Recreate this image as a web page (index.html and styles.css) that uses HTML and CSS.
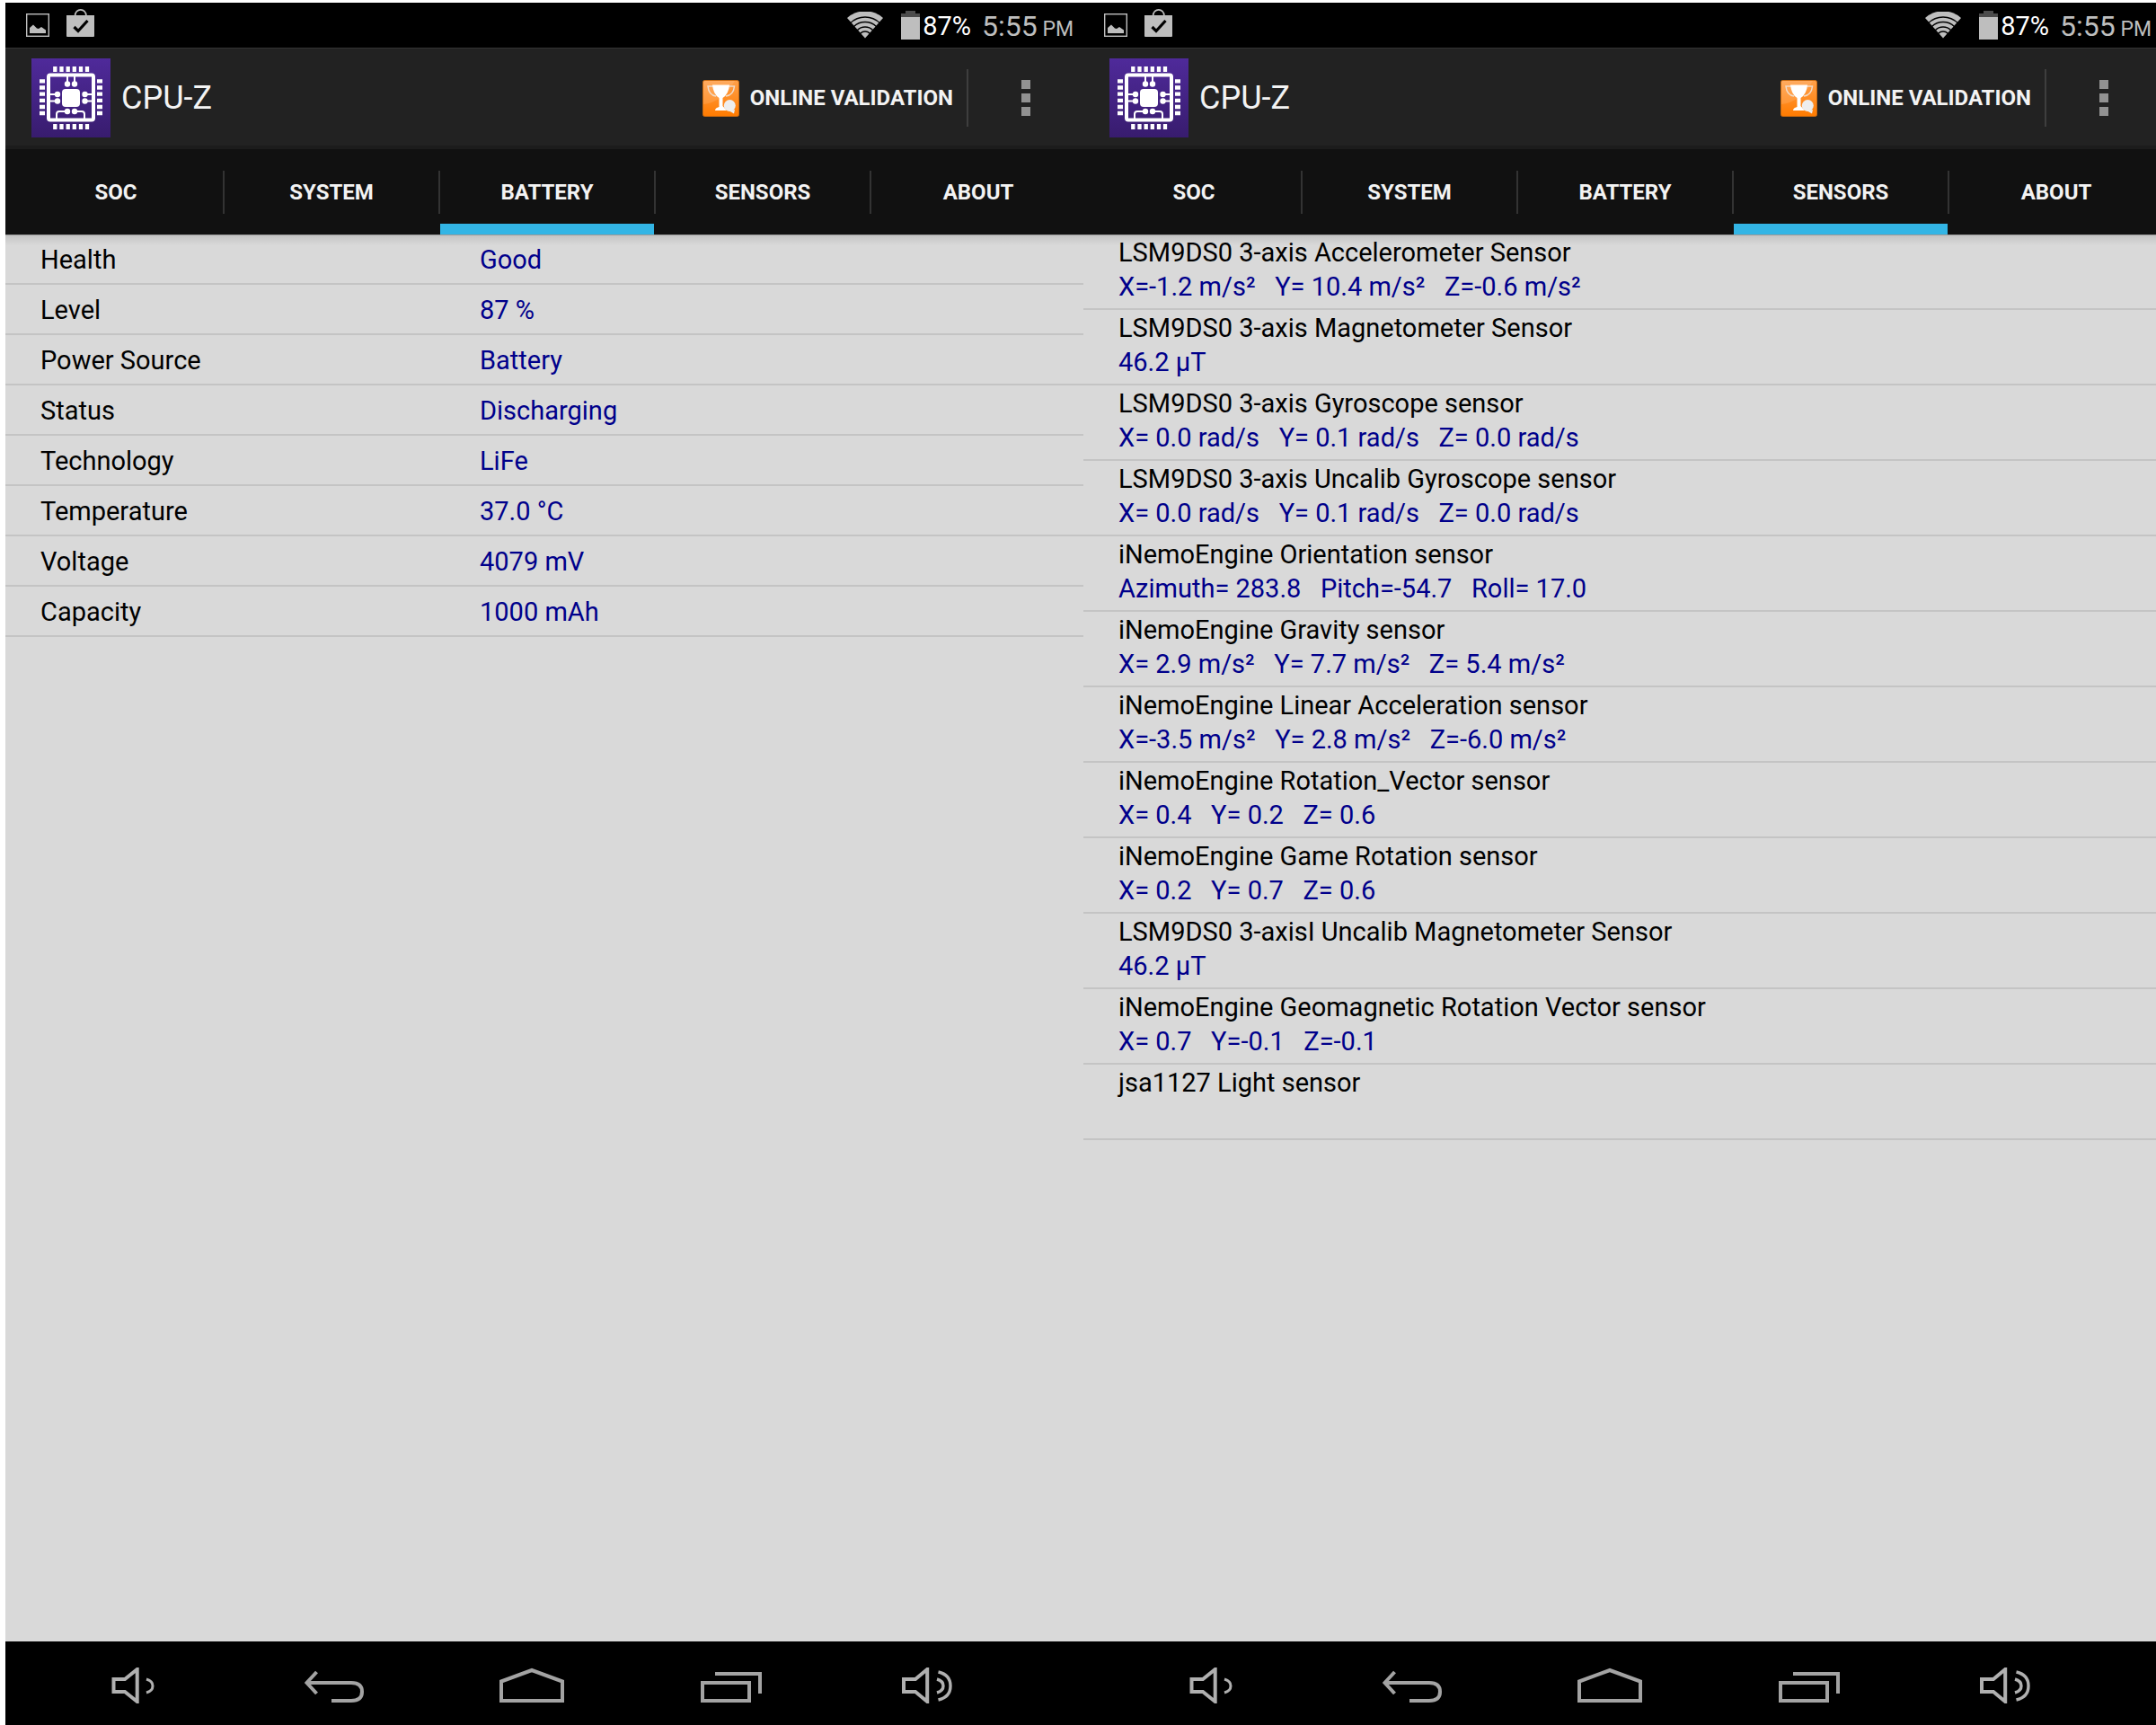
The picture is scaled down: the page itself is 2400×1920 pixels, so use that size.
FILE: index.html
```html
<!DOCTYPE html>
<html lang="en">
<head>
    <meta charset="UTF-8">
    <meta name="viewport" content="width=device-width, initial-scale=1.0">
    <title>CPU-Z</title>
    <link rel="stylesheet" href="styles.css">
</head>
<body>

    <!-- shared icons -->
    <svg class="sprite" aria-hidden="true">
        <linearGradient id="purple" x1="0" y1="0" x2="0" y2="1">
            <stop offset="0" stop-color="#4f2a9a"/>
            <stop offset="1" stop-color="#381c6e"/>
        </linearGradient>
        <linearGradient id="orange" x1="0" y1="0" x2="0" y2="1">
            <stop offset="0" stop-color="#ffa04a"/>
            <stop offset="1" stop-color="#ff7b00"/>
        </linearGradient>
        <symbol id="icon-picture" viewBox="0 0 26 26">
            <rect x="0.7" y="0.7" width="24.600" height="24.600" fill="none" stroke="#bebebe" stroke-width="1.400"/>
            <path d="M4 22V16L8 12.500L12 16.500L14 17L17 15L22 18.500V22Z" fill="#bebebe"/>
        </symbol>
        <symbol id="icon-bag" viewBox="0 0 31 31">
            <path d="M9.500 8C9.500 -1.500 22 -1.500 22 8" fill="none" stroke="#bebebe" stroke-width="1.600"/>
            <path d="M0 7H31V30Q31 31 30 31H1Q0 31 0 30Z" fill="#bebebe"/>
            <path d="M8.500 20L13 24.500L23.500 13" fill="none" stroke="#000" stroke-width="3.200"/>
        </symbol>
        <symbol id="icon-wifi" viewBox="0 0 40 30">
            <path d="M20 29.500L0 7A30 30 0 0 1 40 7Z" fill="#bebebe"/>
            <g fill="none" stroke="#000" stroke-width="1.400">
                <circle cx="20" cy="29.500" r="23.500"/>
                <circle cx="20" cy="29.500" r="18"/>
                <circle cx="20" cy="29.500" r="12.500"/>
                <circle cx="20" cy="29.500" r="7.500"/>
            </g>
        </symbol>
        <symbol id="icon-battery" viewBox="0 0 21 32">
            <path d="M5 0H16V3H21V7H0V3H5Z" fill="#4c4c4c"/>
            <rect y="7" width="21" height="25" fill="#bebebe"/>
        </symbol>
        <symbol id="icon-cpu" viewBox="0 0 88 88">
            <rect width="88" height="88" fill="url(#purple)"/>
            <rect x="19" y="18.500" width="50" height="50" rx="2" fill="none" stroke="#fff" stroke-width="4"/>
            <rect x="34" y="34" width="20" height="20" rx="4" fill="#fff"/>
            <path d="M26.300 9V15M33.500 9V15M40.700 9V15M47.800 9V15M55 9V15M62 9V15M26.300 73V79M33.500 73V79M40.700 73V79M47.800 73V79M55 73V79M62 73V79M9 25.300H15M9 32.500H15M9 39.700H15M9 46.800H15M9 54H15M9 61H15M73 25.300H79M73 32.500H79M73 39.700H79M73 46.800H79M73 54H79M73 61H79" stroke="#fff" stroke-width="4.300"/>
            <path d="M40 20V28M48 20V28M21 40H29M21 47.500H29M59 40H67M59 47.500H67M40 59H31Q28 59 28 62V67M48 59H56Q59 59 59 62V67" fill="none" stroke="#fff" stroke-width="2"/>
            <g fill="#fff">
                <circle cx="40" cy="28.500" r="3.200"/><circle cx="48" cy="28.500" r="3.200"/>
                <circle cx="29" cy="40" r="3.200"/><circle cx="29" cy="47.500" r="3.200"/>
                <circle cx="59.500" cy="40" r="3.200"/><circle cx="59.500" cy="47.500" r="3.200"/>
                <circle cx="40" cy="59" r="3.200"/><circle cx="48" cy="59" r="3.200"/>
            </g>
        </symbol>
        <symbol id="icon-trophy" viewBox="0 0 41 41">
            <rect x="0.500" y="0.500" width="40" height="40" rx="2" fill="url(#orange)" stroke="#c9690f"/>
            <path d="M1 27Q22 25 36 1H1Z" fill="#fff" opacity="0.120"/>
            <path d="M12 7H6Q7 17 15 18M29 7H35.500Q34.500 17 26 18" fill="none" stroke="#f0dccb" stroke-width="1.500"/>
            <path d="M11 5.500H30Q29 16 22.500 20V29L27 34H14Q14 31 18.500 30V20Q12 16 11 5.500Z" fill="#fff"/>
            <circle cx="30.300" cy="28.500" r="6.500" fill="#eee"/>
            <path d="M29 34L35 37.500L36 33Z" fill="#eee"/>
        </symbol>
        <symbol id="icon-volume-down" viewBox="0 0 80 40">
            <path d="M16.500 13H29L42.700 2V38L29 27H16.500Z" fill="none" stroke="#b0b0b0" stroke-width="4"/>
            <path d="M53 13Q60 15 60 20.500T53 28" fill="none" stroke="#b0b0b0" stroke-width="3"/>
        </symbol>
        <symbol id="icon-back" viewBox="0 0 80 40">
            <path d="M21.500 5L10.500 17L21.500 29M10.500 17H60Q72 17 72 27T60 37H38" fill="none" stroke="#a3a3a3" stroke-width="4"/>
        </symbol>
        <symbol id="icon-home" viewBox="0 0 80 40">
            <path d="M6 15.500L40 3L74 15.500V37H6Z" fill="none" stroke="#a3a3a3" stroke-width="4"/>
        </symbol>
        <symbol id="icon-recents" viewBox="0 0 80 40">
            <path d="M9 17H61V37H9ZM23 7H73V29" fill="none" stroke="#a3a3a3" stroke-width="4"/>
        </symbol>
        <symbol id="icon-volume-up" viewBox="0 0 80 40">
            <path d="M12 13H25L38.200 2V38L25 27H12Z" fill="none" stroke="#b0b0b0" stroke-width="4"/>
            <path d="M49 13Q56 15 56 20.500T49 28M50.500 5Q64 8 64 20.500T50.500 36" fill="none" stroke="#b0b0b0" stroke-width="3.400"/>
        </symbol>
    </svg>

    <main class="screens">

        <!-- battery -->
        <section class="screen">
            <header class="status-bar">
                <div class="notifications">
                    <svg class="picture"><use href="#icon-picture"/></svg>
                    <svg class="bag"><use href="#icon-bag"/></svg>
                </div>
                <div class="system">
                    <svg class="wifi"><use href="#icon-wifi"/></svg>
                    <svg class="battery"><use href="#icon-battery"/></svg>
                    <span class="percent">87%</span>
                    <span class="clock">5:55<small> PM</small></span>
                </div>
            </header>
            <div class="action-bar">
                <svg class="logo"><use href="#icon-cpu"/></svg>
                <h1>CPU-Z</h1>
                <button class="validate"><svg class="trophy"><use href="#icon-trophy"/></svg>ONLINE VALIDATION</button>
                <button class="menu" aria-label="More options"><i></i><i></i><i></i></button>
            </div>
            <nav class="tabs">
                <button>SOC</button>
                <button>SYSTEM</button>
                <button class="active">BATTERY</button>
                <button>SENSORS</button>
                <button>ABOUT</button>
            </nav>
            <div class="content">
                <table class="info">
                    <tr><th scope="row">Health</th><td>Good</td></tr>
                    <tr><th scope="row">Level</th><td>87 %</td></tr>
                    <tr><th scope="row">Power Source</th><td>Battery</td></tr>
                    <tr><th scope="row">Status</th><td>Discharging</td></tr>
                    <tr><th scope="row">Technology</th><td>LiFe</td></tr>
                    <tr><th scope="row">Temperature</th><td>37.0 °C</td></tr>
                    <tr><th scope="row">Voltage</th><td>4079 mV</td></tr>
                    <tr><th scope="row">Capacity</th><td>1000 mAh</td></tr>
                </table>
            </div>
            <footer class="nav-bar">
                <button aria-label="Volume down"><svg><use href="#icon-volume-down"/></svg></button>
                <button aria-label="Back"><svg><use href="#icon-back"/></svg></button>
                <button aria-label="Home"><svg><use href="#icon-home"/></svg></button>
                <button aria-label="Recent apps"><svg><use href="#icon-recents"/></svg></button>
                <button aria-label="Volume up"><svg><use href="#icon-volume-up"/></svg></button>
            </footer>
        </section>

        <!-- sensors -->
        <section class="screen">
            <header class="status-bar">
                <div class="notifications">
                    <svg class="picture"><use href="#icon-picture"/></svg>
                    <svg class="bag"><use href="#icon-bag"/></svg>
                </div>
                <div class="system">
                    <svg class="wifi"><use href="#icon-wifi"/></svg>
                    <svg class="battery"><use href="#icon-battery"/></svg>
                    <span class="percent">87%</span>
                    <span class="clock">5:55<small> PM</small></span>
                </div>
            </header>
            <div class="action-bar">
                <svg class="logo"><use href="#icon-cpu"/></svg>
                <h1>CPU-Z</h1>
                <button class="validate"><svg class="trophy"><use href="#icon-trophy"/></svg>ONLINE VALIDATION</button>
                <button class="menu" aria-label="More options"><i></i><i></i><i></i></button>
            </div>
            <nav class="tabs">
                <button>SOC</button>
                <button>SYSTEM</button>
                <button>BATTERY</button>
                <button class="active">SENSORS</button>
                <button>ABOUT</button>
            </nav>
            <div class="content">
                <ul class="sensors">
                    <li><p>LSM9DS0 3-axis Accelerometer Sensor</p><p class="value">X=-1.2 m/s²   Y= 10.4 m/s²   Z=-0.6 m/s²</p></li>
                    <li><p>LSM9DS0 3-axis Magnetometer Sensor</p><p class="value">46.2 µT</p></li>
                    <li><p>LSM9DS0 3-axis Gyroscope sensor</p><p class="value">X= 0.0 rad/s   Y= 0.1 rad/s   Z= 0.0 rad/s</p></li>
                    <li><p>LSM9DS0 3-axis Uncalib Gyroscope sensor</p><p class="value">X= 0.0 rad/s   Y= 0.1 rad/s   Z= 0.0 rad/s</p></li>
                    <li><p>iNemoEngine Orientation sensor</p><p class="value">Azimuth= 283.8   Pitch=-54.7   Roll= 17.0</p></li>
                    <li><p>iNemoEngine Gravity sensor</p><p class="value">X= 2.9 m/s²   Y= 7.7 m/s²   Z= 5.4 m/s²</p></li>
                    <li><p>iNemoEngine Linear Acceleration sensor</p><p class="value">X=-3.5 m/s²   Y= 2.8 m/s²   Z=-6.0 m/s²</p></li>
                    <li><p>iNemoEngine Rotation_Vector sensor</p><p class="value">X= 0.4   Y= 0.2   Z= 0.6</p></li>
                    <li><p>iNemoEngine Game Rotation sensor</p><p class="value">X= 0.2   Y= 0.7   Z= 0.6</p></li>
                    <li><p>LSM9DS0 3-axisI Uncalib Magnetometer Sensor</p><p class="value">46.2 µT</p></li>
                    <li><p>iNemoEngine Geomagnetic Rotation Vector sensor</p><p class="value">X= 0.7   Y=-0.1   Z=-0.1</p></li>
                    <li><p>jsa1127 Light sensor</p><p class="value"></p></li>
                </ul>
            </div>
            <footer class="nav-bar">
                <button aria-label="Volume down"><svg><use href="#icon-volume-down"/></svg></button>
                <button aria-label="Back"><svg><use href="#icon-back"/></svg></button>
                <button aria-label="Home"><svg><use href="#icon-home"/></svg></button>
                <button aria-label="Recent apps"><svg><use href="#icon-recents"/></svg></button>
                <button aria-label="Volume up"><svg><use href="#icon-volume-up"/></svg></button>
            </footer>
        </section>

    </main>

</body>
</html>
```

FILE: styles.css
```css
* {
    box-sizing: border-box;
}
body {
    margin: 0;
    padding: 3px 0 0 6px;
    background: #fff;
    font-family: Roboto, sans-serif;
    overflow: hidden;
}
svg {
    display: block;
    flex: none;
}
button {
    padding: 0;
    border: 0;
    background: none;
    color: #f3f3f3;
    font: bold 24px Roboto, sans-serif;
    cursor: pointer;
}
.sprite {
    position: absolute;
    width: 0;
    height: 0;
}
.screens {
    display: grid;
    grid-template-columns: 50vw 50vw;
}
.screen {
    display: flex;
    flex-direction: column;
    min-height: 100vh;
    background: #d9d9d9;
    overflow: hidden;
}

/* status bar */
.status-bar {
    display: flex;
    justify-content: space-between;
    height: 50px;
    padding: 0 11px 0 23px;
    background: #000;
    color: #bebebe;
}
.notifications {
    display: flex;
    align-items: flex-end;
    gap: 19px;
    padding-bottom: 12px;
}
.picture {
    width: 26px;
    height: 26px;
}
.bag {
    width: 31px;
    height: 31px;
}
.system {
    display: flex;
    align-items: center;
}
.wifi {
    width: 40px;
    height: 30px;
    margin-right: 20px;
}
.battery {
    width: 21px;
    height: 32px;
    margin-right: 3px;
}
.percent {
    padding-top: 2px;
    margin-right: 12px;
    color: #fff;
    font-size: 29px;
}
.clock {
    padding-top: 2px;
    font-size: 32px;
}
.clock small {
    font-size: 23px;
}

/* action bar */
.action-bar {
    display: flex;
    align-items: center;
    height: 113px;
    padding: 0 0 1px 29px;
    background: #222;
    box-shadow: inset 0 1px #333, inset 0 -4px #1c1c1c;
}
.logo {
    width: 88px;
    height: 88px;
}
h1 {
    margin: 0 auto 0 12px;
    color: #f3f3f3;
    font-size: 36px;
    font-weight: 400;
}
.validate {
    display: flex;
    align-items: center;
    gap: 12px;
    height: 64px;
    padding-right: 15px;
    border-right: 2px solid #3e3e3e;
}
.trophy {
    width: 41px;
    height: 41px;
}
.menu {
    display: flex;
    flex-direction: column;
    align-items: center;
    gap: 5px;
    width: 128px;
}
.menu i {
    width: 10px;
    height: 10px;
    background: #929292;
}

/* tabs */
.tabs {
    display: flex;
    height: 95px;
    padding-left: 4px;
    background: #111;
}
.tabs button {
    flex: 0 0 10vw;
    padding-right: 2px;
    background: linear-gradient(#333, #333) right center / 2px 48px no-repeat;
}
.tabs button:last-child {
    background: none;
}
.tabs .active {
    background:
        linear-gradient(#333, #333) right center / 2px 48px no-repeat,
        linear-gradient(#33b5e5, #33b5e5) left bottom / calc(100% - 2px) 12px no-repeat;
}

/* content */
.content {
    flex: 1;
    background: linear-gradient(#999 1px, #c4c4c4 1px, #d9d9d9 12px);
    color: #000;
    font-size: 29px;
    line-height: 38px;
}
.info {
    width: 100%;
    table-layout: fixed;
    border-spacing: 0;
}
.info th,
.info td {
    height: 56px;
    padding: 2px 0 0;
    border-bottom: 2px solid #c4c4c4;
    text-align: left;
    font-weight: 400;
}
.info th {
    width: 44%;
    padding-left: 39px;
}
.info td,
.value {
    color: #00008b;
}
.sensors {
    margin: 0;
    padding: 0;
    list-style: none;
}
.sensors li {
    height: 84px;
    padding: 1px 0 0 39px;
    border-bottom: 2px solid #c4c4c4;
}
.sensors p {
    margin: 0;
    white-space: pre;
}

/* navigation bar */
.nav-bar {
    display: flex;
    height: 96px;
    padding: 2px 62px 0 34px;
    background: #000;
}
.nav-bar button {
    display: flex;
    flex: 1;
    align-items: center;
    justify-content: center;
}
.nav-bar svg {
    width: 80px;
    height: 40px;
}
```
